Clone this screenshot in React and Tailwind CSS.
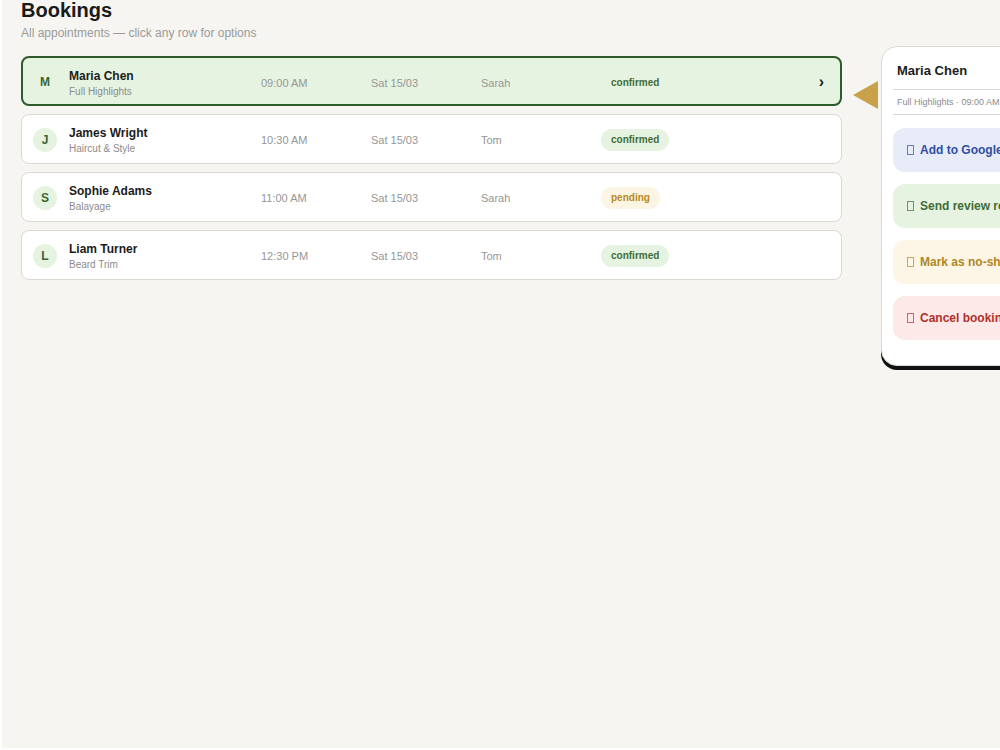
const bookings = [
  { id: 1, initial: 'M', name: 'Maria Chen', service: 'Full Highlights', time: '09:00 AM', date: 'Sat 15/03', staff: 'Sarah', status: 'confirmed' },
  { id: 2, initial: 'J', name: 'James Wright', service: 'Haircut & Style', time: '10:30 AM', date: 'Sat 15/03', staff: 'Tom', status: 'confirmed' },
  { id: 3, initial: 'S', name: 'Sophie Adams', service: 'Balayage', time: '11:00 AM', date: 'Sat 15/03', staff: 'Sarah', status: 'pending' },
  { id: 4, initial: 'L', name: 'Liam Turner', service: 'Beard Trim', time: '12:30 PM', date: 'Sat 15/03', staff: 'Tom', status: 'confirmed' }
]

const actions = [
  { label: 'Add to Google Calendar', className: 'bg-[#e8ecf8] text-[#2f4fa3]' },
  { label: 'Send review request', className: 'bg-[#e7f3e1] text-[#3f6c37]' },
  { label: 'Mark as no-show', className: 'bg-[#fdf6e7] text-[#b1871f]' },
  { label: 'Cancel booking', className: 'bg-[#fde9e8] text-[#b0302b]' }
]

function Row({ booking, selected }) {
  const pill = booking.status === 'pending'
    ? 'bg-[#fdf5e4] text-[#b58a22]'
    : selected ? 'bg-transparent text-[#3f6c37]' : 'bg-[#e6f3e0] text-[#3f6c37]'
  return (
    <div className={selected
      ? 'flex h-[50px] items-center rounded-lg border-2 border-[#2f5a29] bg-[#e7f3e1] pl-[10px] pr-[16px] pt-[2px]'
      : 'flex h-[50px] items-center rounded-lg border border-[#dcd9d2] bg-white pl-[11px] pr-[17px] pt-[1px]'}>
      <div className={`flex h-6 w-6 items-center justify-center rounded-full text-[12px] font-bold text-[#3a6633] ${selected ? 'bg-[#e7f3e1]' : 'bg-[#e6f3e0]'}`}>
        {booking.initial}
      </div>
      <div className="ml-3 mt-[2px] w-[192px]">
        <div className="text-[12px] font-bold leading-[15px] text-[#1c1c1c]">{booking.name}</div>
        <div className="mt-[1px] text-[10px] leading-[13px] text-[#8c8c8c]">{booking.service}</div>
      </div>
      <div className="mt-[2px] w-[110px] text-[11px] text-[#969696]">{booking.time}</div>
      <div className="mt-[2px] w-[110px] text-[11px] text-[#969696]">{booking.date}</div>
      <div className="mt-[2px] w-[120px] text-[11px] text-[#969696]">{booking.staff}</div>
      <span className={`flex h-[22px] items-center rounded-full px-[10px] text-[10px] font-bold ${pill}`}>{booking.status}</span>
      <div className="flex-1" />
      {selected && <span className="text-[16px] font-bold leading-none text-[#1c1c1c]">›</span>}
    </div>
  )
}

export default function App() {
  return (
    <div className="h-[750px] w-[1000px] overflow-hidden bg-white" style={{ fontFamily: '"Liberation Sans", Arial, sans-serif' }}>
      <div className="ml-[2px] flex h-[748px] bg-[#f6f5f1]">
        <div className="w-[840px] shrink-0 pl-[19px]">
          <h1 className="mt-[-4px] text-[20px] font-bold leading-7 text-[#1a1a1a]">Bookings</h1>
          <p className="mt-[1px] text-[12px] leading-4 text-[#9a9a9a]">All appointments — click any row for options</p>
          <div className="mt-[15px] space-y-2">
            {bookings.map((b) => (
              <Row key={b.id} booking={b} selected={b.id === 1} />
            ))}
          </div>
        </div>

        <div className="relative ml-[39px] mt-[46px] h-[320px] w-[240px] shrink-0 self-start rounded-2xl border border-[#dcd9d2] bg-white px-[11px] pt-[15px] shadow-[0_4px_0_#111]">
          <div className="absolute left-[-29px] top-[34px] h-0 w-0 border-y-[14px] border-r-[25px] border-y-transparent border-r-[#c8a149]" />
          <div className="border-b border-[#dcd9d2] px-[4px] pb-[9px] text-[13px] font-bold leading-[18px] text-[#1c1c1c]">Maria Chen</div>
          <div className="whitespace-nowrap border-b border-[#dcd9d2] px-[4px] py-[6px] text-[9px] leading-[12px] text-[#8c8c8c]">Full Highlights · 09:00 AM · Sat 15/03</div>
          <div className="mt-[13px] space-y-3">
            {actions.map((a) => (
              <div key={a.label} className={`flex h-[44px] items-center whitespace-nowrap rounded-xl pl-[14px] text-[12px] font-bold ${a.className}`}>
                <span className="mr-[6px] inline-block h-[10px] w-[7px] border border-current opacity-70" />
                {a.label}
              </div>
            ))}
          </div>
        </div>
      </div>
    </div>
  )
}
